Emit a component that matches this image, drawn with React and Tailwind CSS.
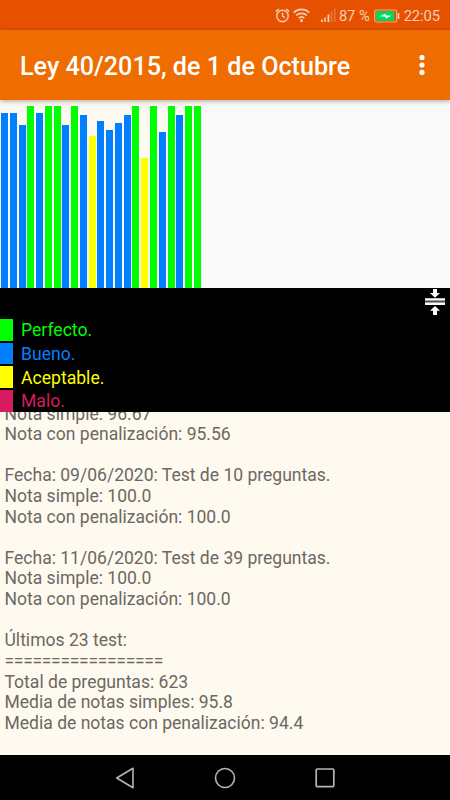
import React from 'react';

const COLORS = {
  perfecto: '#00ff00',
  bueno: '#0080ff',
  aceptable: '#ffff00',
  malo: '#d81b60',
};

// [height in px, grade]
const bars = [
  [175, 'bueno'],
  [175, 'bueno'],
  [163.5, 'bueno'],
  [182, 'perfecto'],
  [175, 'bueno'],
  [182, 'perfecto'],
  [182, 'perfecto'],
  [163.5, 'bueno'],
  [182, 'perfecto'],
  [173, 'bueno'],
  [152, 'aceptable'],
  [167.3, 'bueno'],
  [158, 'bueno'],
  [165.3, 'bueno'],
  [173, 'bueno'],
  [182, 'perfecto'],
  [129.7, 'aceptable'],
  [182, 'perfecto'],
  [156, 'bueno'],
  [182, 'perfecto'],
  [173, 'bueno'],
  [182, 'perfecto'],
  [182, 'perfecto'],
];

const legend = [
  { label: 'Perfecto.', grade: 'perfecto' },
  { label: 'Bueno.', grade: 'bueno' },
  { label: 'Aceptable.', grade: 'aceptable' },
  { label: 'Malo.', grade: 'malo' },
];

const lines = [
  'Nota simple: 96.67',
  'Nota con penalización: 95.56',
  '',
  'Fecha: 09/06/2020: Test de 10 preguntas.',
  'Nota simple: 100.0',
  'Nota con penalización: 100.0',
  '',
  'Fecha: 11/06/2020: Test de 39 preguntas.',
  'Nota simple: 100.0',
  'Nota con penalización: 100.0',
  '',
  'Últimos 23 test:',
  '=================',
  'Total de preguntas: 623',
  'Media de notas simples: 95.8',
  'Media de notas con penalización: 94.4',
];

const StatusBar = () => (
  <div className="flex h-[30px] shrink-0 items-center justify-end bg-[#e65100] pr-[10px] text-[14.8px] text-[#f9cdb4]">
    <svg className="mr-[3px] h-[15px] w-[15px]" viewBox="0 0 15 15" fill="none" stroke="currentColor" strokeWidth="1.4">
      <circle cx="7.5" cy="8" r="5.7" />
      <path d="M7.5 4.8v3.4l2.4 1.5M.8 3.6 3.8 1M14.2 3.6 11.2 1" />
    </svg>
    <svg className="mr-[11px] h-[14px] w-[17px]" viewBox="0 0 17 14" fill="none" stroke="currentColor" strokeWidth="1.6">
      <path d="M.7 4.6C5 .3 12 .3 16.300 4.600M3.100 7.500c3-2.900 7.800-2.900 10.800 0M5.600 10.200c1.700-1.500 4.100-1.500 5.800 0" />
      <circle cx="8.500" cy="12.400" r="1.500" fill="currentColor" stroke="none" />
    </svg>
    <svg className="mr-[3px] h-[14px] w-[15px]" viewBox="0 0 15 14" fill="currentColor">
      <path d="M0 11.500h1.800v2.500H0zM3.300 9.500h1.600v4.500H3.300zM6.500 6.500h1.800V14H6.500z" />
      <path d="M9.700 3.500h1.600V14H9.700zM12.900.5h1.600V14h-1.600z" opacity=".3" />
    </svg>
    <span className="pt-[2px] tracking-[-0.1px] whitespace-nowrap">87 %</span>
    <svg className="mt-[1px] mr-[4px] ml-[4px] h-[14px] w-[26px]" viewBox="0 0 26 14" fill="none">
      <rect x=".7" y="1" width="22" height="12" rx="1.800" stroke="#f4a780" strokeWidth="1.200" />
      <rect x="2" y="2.300" width="18.300" height="9.400" fill="#00d860" />
      <path d="M24.500 4v6" stroke="#f9cdb4" strokeWidth="1.700" />
      <path d="M5.700 7.200 11.500 4.500l.5 1.700 5.500.5-5.500 2.800-.8-1.800z" fill="#d8f5e0" />
    </svg>
    <span className="pt-[2px] tracking-[-0.1px]">22:05</span>
  </div>
);

const AppBar = () => (
  <header className="z-10 flex h-[70px] shrink-0 items-center justify-between bg-[#ef6c00] pr-[25px] pl-[20px] text-white shadow-[0_1px_5px_rgba(0,0,0,0.35)]">
    <h1 className="pt-[3px] text-[25.15px] leading-[30px] font-medium whitespace-nowrap">Ley 40/2015, de 1 de Octubre</h1>
    <svg className="h-5 w-[6px]" viewBox="0 0 6 20" fill="currentColor">
      <circle cx="3" cy="2.500" r="2.600" />
      <circle cx="3" cy="10" r="2.600" />
      <circle cx="3" cy="17.400" r="2.600" />
    </svg>
  </header>
);

const Chart = () => (
  <div className="flex h-[188px] shrink-0 gap-[1.770px] bg-[#fafafa] pl-[1px]">
    {bars.map(([height, grade], idx) => (
      <div key={idx} className="flex h-full w-[7px] items-end bg-[#fffaf0]">
        <div className="w-full" style={{ height, backgroundColor: COLORS[grade] }} />
      </div>
    ))}
  </div>
);

const Legend = () => (
  <div className="relative h-[124px] shrink-0 bg-black pt-[31px]">
    <svg className="absolute top-0 right-[5px] h-[28px] w-5" viewBox="0 0 20 28" fill="#fff">
      <path d="M8 1h4v4h3L10 9.700 5 5h3zM0 10.300h20v2.400H0zM0 14.300h20v2.700H0zM10 18l5 4.700h-3V27H8v-4.300H5z" />
      <path d="M0 12.700h20v1.600H0z" fill="#555" />
    </svg>
    <div className="flex flex-col gap-[2px]">
      {legend.map((item) => (
        <div key={item.grade} className="flex h-[21.700px] items-center">
          <div className="h-full w-[13px]" style={{ backgroundColor: COLORS[item.grade] }} />
          <span className="pt-[2px] pl-[8px] text-[17.600px] leading-[21px]" style={{ color: COLORS[item.grade] }}>
            {item.label}
          </span>
        </div>
      ))}
    </div>
  </div>
);

const Results = () => (
  <div className="h-[343px] shrink-0 overflow-hidden bg-[#fffaf0] pl-[4.500px] text-[17.550px] leading-[20.620px] text-[#6b6863]">
    <div className="-mt-[8.400px]">
      {lines.map((line, idx) => (
        <p key={idx} className={`h-[20.620px] whitespace-nowrap ${line.startsWith('=') ? 'tracking-[-0.3px]' : ''}`}>
          {line}
        </p>
      ))}
    </div>
  </div>
);

const NavBar = () => (
  <div className="flex h-[45px] shrink-0 items-center justify-between bg-black pr-[114px] pl-[115px] text-[#b5b5b5]">
    <svg className="h-[22px] w-5" viewBox="0 0 20 22" fill="none" stroke="currentColor" strokeWidth="1.600" strokeLinejoin="round">
      <path d="M18 1.300v19.400L1.700 11z" />
    </svg>
    <svg className="h-[22px] w-[22px]" viewBox="0 0 22 22" fill="none" stroke="currentColor" strokeWidth="1.600">
      <circle cx="11" cy="11" r="9.500" />
    </svg>
    <svg className="h-[22px] w-[22px]" viewBox="0 0 22 22" fill="none" stroke="currentColor" strokeWidth="1.700">
      <rect x="2.200" y="2" width="17.600" height="17.600" rx="1" />
    </svg>
  </div>
);

const App = () => {
  return (
    <div className="flex h-[800px] w-[450px] flex-col overflow-hidden bg-black font-[Roboto,sans-serif]">
      <StatusBar />
      <AppBar />
      <Chart />
      <Legend />
      <Results />
      <NavBar />
    </div>
  );
};

export default App;
